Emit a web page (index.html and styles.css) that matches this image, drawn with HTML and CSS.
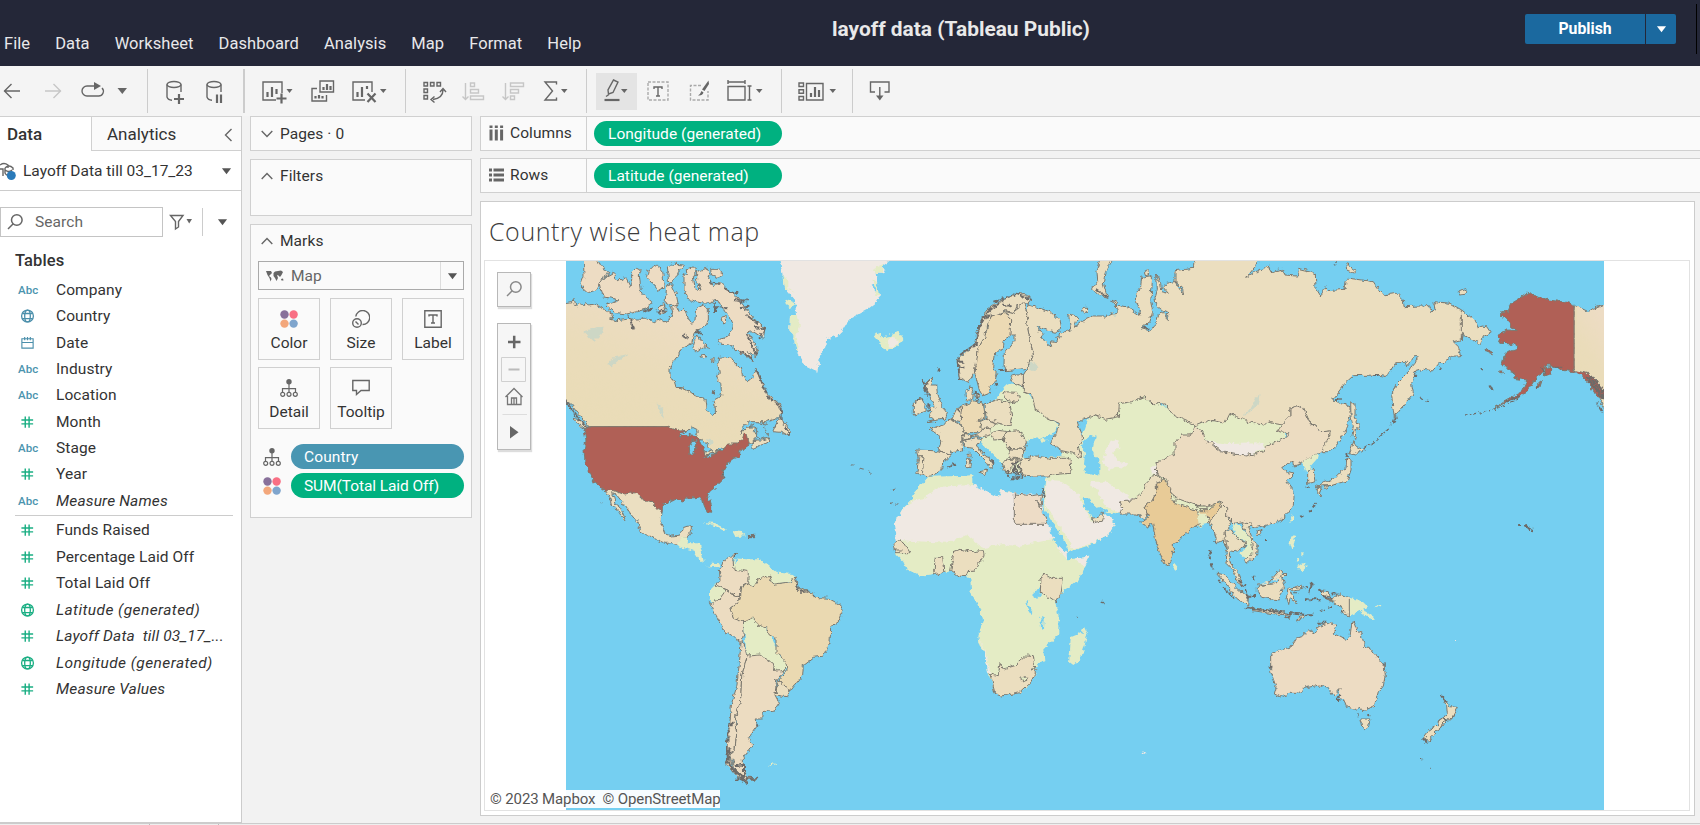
FILE: index.html
```html
<!DOCTYPE html>
<html lang="en">
<head>
<meta charset="utf-8">
<title>layoff data (Tableau Public)</title>
<link rel="stylesheet" href="styles.css">
</head>
<body>
<svg class="defs" width="0" height="0">
  <symbol id="globe" viewBox="0 0 16 16"><g fill="none" stroke="currentColor" stroke-width="1.4"><circle cx="8" cy="8" r="6.3"/><ellipse cx="8" cy="8" rx="3" ry="6.3"/><path d="M2.6 5.3H13.4M2.6 10.7H13.4"/></g></symbol>
  <symbol id="hash" viewBox="0 0 16 16"><path d="M5.6 2V14M9.7 2V14M1.5 5.8H14M1.5 10H14" fill="none" stroke="currentColor" stroke-width="1.5"/></symbol>
  <symbol id="cal" viewBox="0 0 16 16"><path d="M2 3.5H14V13.5H2ZM2 7.5H14M5 1.5V5M8 1.5V5M11 1.5V5" fill="none" stroke="currentColor" stroke-width="1.2"/></symbol>
  <symbol id="dots" viewBox="0 0 18 18"><circle cx="4.5" cy="4.5" r="4.2" fill="#88709a"/><circle cx="13.6" cy="4.5" r="4.2" fill="#f96f84"/><circle cx="4.5" cy="13.6" r="4.2" fill="#f3a77b"/><circle cx="13.6" cy="13.6" r="4.2" fill="#7fa5cd"/></symbol>
  <symbol id="tree" viewBox="0 0 18 18"><circle cx="9" cy="2.8" r="2.7" fill="#666"/><g fill="none" stroke="#666" stroke-width="1.2"><path d="M9 5V13M2.5 13V9.7H15.5V13"/><circle cx="2.7" cy="15.3" r="2"/><circle cx="9" cy="15.3" r="2"/><circle cx="15.3" cy="15.3" r="2"/></g></symbol>
  <symbol id="down" viewBox="0 0 12 8"><path d="M1 1H11L6 7.6Z" fill="currentColor"/></symbol>
  <symbol id="mag" viewBox="0 0 18 18"><g fill="none" stroke="currentColor" stroke-width="1.5"><circle cx="10.8" cy="7" r="5.3"/><path d="M7.2 10.8L2 16"/></g></symbol>
</svg>

<header class="top">
  <nav class="menu"><span>File</span><span>Data</span><span>Worksheet</span><span>Dashboard</span><span>Analysis</span><span>Map</span><span>Format</span><span>Help</span></nav>
  <h1 class="doc-title">layoff data (Tableau Public)</h1>
  <div class="publish"><button class="pub-main">Publish</button><button class="pub-more"><svg width="11" height="8"><use href="#down"/></svg></button></div>
  <i class="edge"></i>
</header>

<div class="toolbar">
  <div class="tools t1">
    <svg width="32" height="34" viewBox="0 74 32 34"><path class="ln" d="M4 91H20M11.5 84L4.5 91L11.5 98"/></svg>
    <svg width="42" height="34" viewBox="32 74 42 34"><path class="ln off" d="M45 91H61M53.5 84L60.5 91L53.5 98"/></svg>
    <svg width="36" height="34" viewBox="74 74 36 34"><path class="ln" d="M97 86H87a5 5 0 0 0 0 10H98.500a4.700 4.700 0 0 0 3.500-8"/><path class="fl" d="M94 82L101 86L94 90Z"/></svg>
    <svg width="30" height="34" viewBox="110 74 30 34"><path class="fl" d="M117.500 88H127L122.300 94Z"/></svg>
  </div>
  <div class="tools t2">
    <svg width="47" height="34" viewBox="148 74 47 34"><g class="ln"><ellipse cx="174" cy="84.500" rx="7" ry="3"/><path d="M167 84.500V97Q168 100 172 100.200M181 84.500V92"/></g><path class="th" d="M179 94V104M174 99H184"/></svg>
    <svg width="40" height="34" viewBox="195 74 40 34"><g class="ln"><ellipse cx="214" cy="84.500" rx="7" ry="3"/><path d="M207 84.500V97Q208 100 212 100.200M221 84.500V92"/></g><path class="th" d="M217 94.500V103M221 94.500V103"/></svg>
  </div>
  <div class="tools t3">
    <svg width="55" height="34" viewBox="245 74 55 34"><path class="ln" d="M276 100H263V82H282V93"/><path class="th" d="M267.500 92V97M272 87V97M276.500 89V94M281.500 93.500V103.500M276.500 98.500H286.500"/><path class="fl" d="M286.500 89H292.500L289.500 93Z"/></svg>
    <svg width="45" height="34" viewBox="300 74 45 34"><path class="ln" d="M320 81H333.500V92H320ZM317 88.500H312V101H326.500V95"/><path class="th" d="M323.500 87V90M327 84V90M330.500 86V90M315.500 96V98.500M319 95V98.500M322.500 96V98.500"/></svg>
    <svg width="55" height="34" viewBox="345 74 55 34"><path class="ln" d="M365 100H353V82H372V92"/><path class="th" d="M357.500 92V97M362 87V97M367 86V89M367.500 93.500L375.500 102M375.500 93.500L367.500 102"/><path class="fl" d="M380 89H386.500L383.300 93Z"/></svg>
  </div>
  <div class="tools t4">
    <svg width="46" height="34" viewBox="406 74 46 34"><path class="ln" d="M424 82.500h3.500v3.500h-3.500zM430.500 82.500h3.500v3.500h-3.500zM437 82.500h3.500v3.500h-3.500zM424 89h3.500v3.500h-3.500zM424 95.500h3.500v3.500h-3.500zM443 90Q443 98 433 99.500M440 92L443 88.500L446 92M434.500 96.500L431 99.500L434.500 102.500"/></svg>
    <svg width="40" height="34" viewBox="452 74 40 34"><path class="ln off" d="M465.500 83V99M462.500 96.500L465.500 99.500L468.500 96.500M470.500 83h4v3.500h-4zM470.500 89.500h8v3.500h-8zM470.500 96h13v3.500h-13z"/></svg>
    <svg width="40" height="34" viewBox="492 74 40 34"><path class="ln off" d="M505.500 83V99M502.500 96.500L505.500 99.500L508.500 96.500M510.500 83h13v3.500h-13zM510.500 89.500h8v3.500h-8zM510.500 96h4v3.500h-4z"/></svg>
    <svg width="40" height="34" viewBox="532 74 40 34"><path class="ln" d="M556.500 84.500V82H545L552.500 91L545 100H556.500V97.500" stroke-width="2"/><path class="fl" d="M561 89H567.500L564.300 93Z"/></svg>
  </div>
  <div class="tools t5">
    <svg class="hot" width="41" height="37" viewBox="596 73 41 37"><path class="ln" d="M613.500 80L618 82L613 92.500L608.500 94L608 90Z"/><path class="th" d="M604.500 100H619.500"/><path class="ln" d="M606 96.500L609 94.500"/><path class="fl" d="M621 89H627.500L624.300 93Z"/></svg>
    <svg width="42" height="34" viewBox="637 74 42 34"><path class="ln dash" d="M648 82H668V100H648Z"/><path class="ln" d="M654 89V87H662V89M658 87V96M656 96H660" stroke-width="1.700"/></svg>
    <svg width="40" height="34" viewBox="679 74 40 34"><path class="ln dash" d="M701 85.500H690.500V100H708V91"/><path class="fl" d="M708.500 80.500L709 84L704.500 91L702 89.500ZM701.500 91L703.500 92.500Q702.500 96 698 95.500Q700.500 94 701.500 91Z"/></svg>
    <svg width="55" height="34" viewBox="719 74 55 34"><path class="ln" d="M728 86.500H745V100H728ZM728 82H745M728 80V84M745 80V84M749.500 86V100M747.500 86H751.500M747.500 100H751.500"/><path class="fl" d="M756 89H762.500L759.300 93Z"/></svg>
  </div>
  <div class="tools t6">
    <svg width="65" height="34" viewBox="782 74 65 34"><path class="ln" d="M799 83h4.500v3.500h-4.500zM799 89.700h4.500v3.500h-4.500zM799 96.500h4.500v3.500h-4.500zM806.500 83.500H823V100H806.500Z"/><path class="th" d="M811 93V97M815 87V97M819 90V97"/><path class="fl" d="M829.500 89H836L832.800 93Z"/></svg>
  </div>
  <div class="tools t7">
    <svg width="50" height="34" viewBox="853 74 50 34"><path class="ln" d="M875 92H870.500V82H889V92H884.500M879.800 87V97"/><path class="fl" d="M876 95.500H883.500L879.800 100.500Z"/></svg>
  </div>
</div>

<main class="work">
  <aside class="data">
    <div class="tabs"><span class="tab on">Data</span><span class="tab">Analytics<svg width="9" height="14" viewBox="0 0 9 14"><path class="ln" d="M7.500 1L1.500 7L7.500 13"/></svg></span></div>
    <div class="source">
      <svg width="16" height="20" viewBox="0 0 16 20"><g class="ln"><path d="M0 4Q4 1 8 4V7M0 8H3V15M5 7Q9 3 13 7V9M5 7V12Q6 14 7 14M5 9Q9 12 12 9"/></g><circle cx="11.300" cy="14.500" r="4.500" fill="#2a7ab9"/></svg>
      <span>Layoff Data till 03_17_23</span><svg class="dd" width="11" height="8"><use href="#down"/></svg>
    </div>
    <div class="search">
      <div class="box"><svg width="18" height="18"><use href="#mag"/></svg><span>Search</span></div>
      <svg class="funnel" width="25" height="18" viewBox="0 0 25 18"><path class="ln" d="M1.500 2.500H14L9.500 8.500V14L6.500 16V8.500Z"/><path class="fl" d="M17.500 6H23L20.200 10.500Z"/></svg>
      <i></i><svg class="dd" width="11" height="8"><use href="#down"/></svg>
    </div>
    <h2>Tables</h2>
    <ul class="fields dims">
      <li><b>Abc</b>Company</li><li class="bl"><svg><use href="#globe"/></svg>Country</li><li class="bl"><svg><use href="#cal"/></svg>Date</li><li><b>Abc</b>Industry</li><li><b>Abc</b>Location</li><li class="gr"><svg><use href="#hash"/></svg>Month</li><li><b>Abc</b>Stage</li><li class="gr"><svg><use href="#hash"/></svg>Year</li><li class="it"><b>Abc</b>Measure Names</li>
    </ul>
    <ul class="fields meas">
      <li class="gr"><svg><use href="#hash"/></svg>Funds Raised</li><li class="gr"><svg><use href="#hash"/></svg>Percentage Laid Off</li><li class="gr"><svg><use href="#hash"/></svg>Total Laid Off</li><li class="gr it wide"><svg><use href="#globe"/></svg>Latitude (generated)</li><li class="gr it"><svg><use href="#hash"/></svg>Layoff Data&nbsp; till 03_17_...</li><li class="gr it wide"><svg><use href="#globe"/></svg>Longitude (generated)</li><li class="gr it"><svg><use href="#hash"/></svg>Measure Values</li>
    </ul>
  </aside>

  <section class="cards">
    <div class="card pages"><h3><svg width="12" height="8" viewBox="0 0 12 8"><path class="ln" d="M.7 1L6 6.500L11.300 1"/></svg>Pages · 0</h3></div>
    <div class="card filters"><h3><svg width="12" height="8" viewBox="0 0 12 8"><path class="ln" d="M.7 7L6 1.500L11.300 7"/></svg>Filters</h3></div>
    <div class="card marks"><h3><svg width="12" height="8" viewBox="0 0 12 8"><path class="ln" d="M.7 7L6 1.500L11.300 7"/></svg>Marks</h3>
      <div class="select"><svg width="18" height="12" viewBox="0 0 18 12"><path class="fl" d="M0 1L5 1L6 3L4 5L3 6L5 7.500L5.500 9L4.500 11.500L3.500 8L1.500 5ZM7.500 3L9 1.500L15 .5L17 2L15.500 5L14 7L12.500 5.500L11 5L12 8L10.500 11L9 8L7.500 6ZM15 9L17 8.500L17.500 10.500H15.500Z"/></svg><span>Map</span><em><svg width="11" height="8"><use href="#down"/></svg></em></div>
      <div class="grid">
        <div><svg width="18" height="18"><use href="#dots"/></svg>Color</div>
        <div><svg width="18" height="18" viewBox="0 0 18 18"><g class="ln"><path d="M3.800 6.500A7 7 0 1 1 10.500 14.500"/><circle cx="5" cy="13" r="4.300"/><path d="M3.500 11.500L6.500 14.500"/></g></svg>Size</div>
        <div><svg width="18" height="18" viewBox="0 0 18 18"><path class="ln" d="M.8 .8H17.200V17.200H.8ZM5 6.500V5H13V6.500M9 5V13M7 13H11"/></svg>Label</div>
        <div><svg width="18" height="18"><use href="#tree"/></svg>Detail</div>
        <div><svg width="18" height="18" viewBox="0 0 18 18"><path class="ln" d="M.8 1.500H17.200V11.500H9L4.500 15.500V11.500H.8Z"/></svg>Tooltip</div>
      </div>
      <div class="enc"><svg width="18" height="18"><use href="#tree"/></svg><span class="pill blue">Country</span></div>
      <div class="enc"><svg width="18" height="18"><use href="#dots"/></svg><span class="pill">SUM(Total Laid Off)</span></div>
    </div>
  </section>

  <section class="canvas">
    <div class="shelf"><div class="name"><svg width="15" height="16" viewBox="0 0 15 16"><path class="bar" d="M2 4.500V15.500M7.300 4.500V15.500M12.600 4.500V15.500M2 .5V3M7.300 .5V3M12.600 .5V3"/></svg>Columns</div><span class="pill">Longitude (generated)</span></div>
    <div class="shelf"><div class="name"><svg width="15" height="14" viewBox="0 0 15 14"><path class="bar" d="M4.500 2H15M4.500 7H15M4.500 12H15M0 2H3M0 7H3M0 12H3"/></svg>Rows</div><span class="pill">Latitude (generated)</span></div>
    <div class="sheet">
      <h2 class="viz-title">Country wise heat map</h2>
      <div class="viz">
        <svg class="map" width="1038" height="549" viewBox="258 63 3114 1647">
          <defs><filter id="rough" x="0" y="0" width="1" height="1" color-interpolation-filters="sRGB"><feTurbulence type="fractalNoise" baseFrequency=".07" numOctaves="2" seed="4"/><feDisplacementMap in="SourceGraphic" scale="17" xChannelSelector="R" yChannelSelector="G"/></filter>
          <linearGradient id="can" x1="0" y1="1" x2=".5" y2="0"><stop offset="0" stop-color="#e9dcb5"/><stop offset=".6" stop-color="#eadcba"/><stop offset="1" stop-color="#eddcc4"/></linearGradient></defs>
          <rect x="258" y="60" width="3120" height="1655" fill="#75cff1"/>
          <g filter="url(#rough)">
          <rect x="258" y="60" width="3120" height="1655" fill="#75cff1"/>
          <!-- Greenland, Iceland -->
          <path class="ice" d="M900 50H1215L1225 66 1205 80 1215 95 1190 100 1195 130 1175 140 1200 170 1192 185 1160 210 1115 235 1100 250 1085 275 1072 288 1040 295 1035 325 1020 350 1012 395 1000 390 972 375 950 335 940 290 928 270 930 230 948 225 945 180 915 145 910 100Z"/>
          <path class="grn" d="M930 225L950 225 960 260 945 290 956 320 950 335 940 290 928 270ZM910 105L922 120 922 145 935 150 945 160 930 150 915 145ZM918 178L945 190 935 205 920 195ZM1175 90L1210 75 1205 95 1185 100ZM1175 115L1190 125 1198 172 1180 165 1190 150Z"/>
          <g transform="translate(1140 0)"><path class="grn" d="M40 285L60 278 65 292 90 287 115 275 130 298 110 320 80 330 60 322 62 308Z"/><ellipse class="ice" cx="98" cy="306" rx="18" ry="14"/></g>
          <!-- North America -->
          <g class="st">
          <path fill="url(#can)" d="M240 190L275 185 282 175 288 198 300 190 308 198 320 188 325 195 340 193 365 203 385 213 400 225 392 238 410 242 440 238 450 228 455 240 475 240 490 232 520 245 545 238 560 250 565 235 580 225 575 200 590 190 600 215 612 205 625 235 635 250 648 240 650 205 670 195 685 205 685 240 668 265 650 270 640 285 635 310 605 325 595 345 582 362 570 390 570 412 582 420 588 442 605 443 630 455 650 470 675 475 678 508 697 528 706 522 706 505 702 480 720 470 725 455 722 430 710 418 718 395 713 370 716 352 735 350 755 355 770 375 785 385 787 410 802 425 812 420 822 405 828 385 845 420 857 455 880 475 903 497 905 520 885 538 860 545 810 545 790 560 778 585 800 562 828 558 822 575 830 592 822 603 808 614 772 615 700 640 675 647 650 600 568 562 328 562 315 545 290 515 270 490 240 480Z"/>
          <path class="b2" d="M310 50H350L362 80 390 95 360 125 348 150 325 158 302 137 312 110ZM400 97L405 115 425 125 435 110 450 140 455 120 455 100 470 85 480 90 478 110 485 160 515 185 505 205 470 215 440 222 405 218 378 195 420 180 370 170 362 150 358 130 380 108ZM505 90L530 76 548 90 552 140 535 150 520 135 500 110ZM562 78L575 72 608 75 600 95 585 110 573 130 565 120ZM560 140L575 132 588 160 595 195 575 200 555 190Z"/>
          <path class="b2" d="M620 90Q635 75 652 85L640 110 645 145 660 150 650 120 650 95 680 85 690 100 685 120 700 140 720 125 745 150 775 175 800 210 830 245 855 265 850 295 820 275 805 278 830 320 830 350 805 335 820 362 780 340 750 315 715 312 718 298 748 290 760 255 750 230 730 210 712 180 690 190 660 188 625 178 612 150 612 110ZM692 88L720 88 730 105 715 112 695 105ZM650 285L665 305 690 325 670 320 650 335 638 325ZM663 345l12-2 2 8-10 4zM695 355l8-2-2 14zM722 232l16-4 2 16-12 8zM535 200l18-6 5 20-18 8z"/>
          <path class="b1" d="M826 600L850 600 870 592 865 603 835 620 820 628 815 618ZM900 528L878 575 905 577 925 588 932 575 922 555 908 552ZM282 535L300 540 322 560 315 568 290 550Z"/>
          <path class="mx" d="M375 748H495L546 812 543 850 555 880 575 888 600 885 608 862 635 857 630 880 622 893 603 895 605 903 592 920 580 908 555 910 500 885 478 870 475 850 450 820 430 790 410 765 398 758 405 790 420 800 438 842 425 830 410 805 395 795 390 775Z"/>
          </g>
          <g class="dk"><path d="M690 125L715 135M735 145L760 160 775 155M765 180L790 185 800 180M780 205L805 200M800 225L835 250M825 262L855 265 835 300M800 280L830 345M780 335L820 358M258 480L275 510 328 575M445 225L460 265M608 285L625 295M650 270L665 285M490 215L520 205M530 215L555 212M830 390L860 460M860 465L900 500M905 500V540M700 200L740 205M705 215V190M915 560L930 588M728 680L733 715"/></g>
          <!-- Central America, Caribbean -->
          <path class="grn" d="M603 892H622L620 910H660L667 945 672 970 690 980 700 968 718 970 712 980 690 982 680 975 655 955 640 932 592 918ZM665 846L700 848 740 868 735 874 690 852ZM757 873L785 876 797 886 765 888Z"/>
          <path class="dot" d="M806 886h18v4h-18zM1115 675h6M1138 684l14 4M1163 692l9 8M1238 748h8M1230 790l8 4M1243 792h10M362 785h5M697 452l8 4-2 10-6-6z"/>
          <!-- Lakes -->
          <path class="lake" d="M310 275L350 262 372 260 365 280 340 305 325 290ZM378 372L410 348 445 343 410 365 395 382ZM530 490L548 505 555 540 545 525Z"/>

          <!-- Eurasia -->
          <g transform="translate(1140 0)">
          <path class="grn" d="M432 440L475 428 500 455 540 515 595 555 575 590 540 615 500 600 490 650 560 650 605 632 650 640 690 520 780 480 860 465 1000 550 1100 515 1270 540 1280 590 1220 650 1100 700 1050 850 1015 858 900 800 780 822 740 815 715 805 700 792 685 775 668 775 672 800 690 825 700 845 725 840 738 822 765 850 745 885 690 915 625 937 620 915 600 880 580 850 550 800 560 705 480 700 430 690 430 665 415 660 385 630 362 605 372 590 380 520Z"/>
          <path class="ice" d="M560 720L600 722 625 740 655 760 670 800 695 845 725 842 738 822 765 850 745 885 690 912 640 925 600 860 555 795ZM690 725L740 725 790 760 820 780 780 822 740 800 715 760ZM752 605L775 600 780 620 760 640 770 665 805 670 795 685 770 680 750 690 728 670 735 640ZM1035 600L1100 612 1205 610 1215 625 1155 650 1085 638ZM870 680L895 670 890 705 875 700Z"/>
          <path class="wt" d="M498 625L512 597 528 588 540 600 550 610 570 605 575 612 605 632 608 650 570 652 540 648 500 655 490 645ZM672 600L690 585 710 590 705 610 692 620 705 650 718 655 718 705 700 708 675 700 672 670 675 640 665 620ZM543 595l30-12 12 4-20 14z"/>
          <g class="st b1">
          <path d="M505 195L540 205 570 215 600 240 605 265 590 277 560 270 528 258 545 280 552 305 575 322 570 302 590 305 600 280 632 270 626 225 640 222 652 235 643 262 665 245 700 228 740 228 772 215 765 195 800 200 825 215 842 228 838 205 826 185 828 160 842 140 845 112 865 108 878 115 875 150 872 185 878 215 870 245 845 265 870 273 885 255 895 225 910 215 925 245 922 215 905 208 888 195 885 175 892 150 890 105 902 130 905 155 925 160 908 140 920 130 945 125 970 165 968 145 945 125 945 92 1000 85 1003 50H1200L1185 80 1160 112 1180 98 1205 90 1225 75 1232 95 1270 88 1275 105 1312 108 1316 85 1350 93 1366 102 1368 145 1382 168 1395 140 1405 152 1455 148 1458 125 1468 115 1540 125 1550 140 1570 165 1610 160 1630 180 1632 200 1705 197 1715 215 1725 212 1722 185 1770 190 1805 210 1850 245 1858 265 1862 258 1880 260 1892 278 1870 290 1862 313 1840 300 1812 290 1810 275 1803 300 1780 305 1795 320 1802 350 1775 352 1740 370 1720 393 1690 388 1665 395 1655 430 1660 460 1635 490 1620 510 1603 532 1598 500 1595 465 1608 432 1640 400 1665 370 1675 350 1660 350 1640 380 1635 365 1610 365 1585 400 1580 410 1555 405 1480 407 1455 430 1418 478 1440 490 1470 500 1470 530 1460 570 1430 615 1405 635 1385 635 1385 615 1400 605 1412 573 1385 575 1350 548 1330 505 1312 498 1290 505 1290 530 1268 552 1230 545 1210 555 1165 545 1130 530 1110 520 1095 550 1050 540 1005 558 990 548 960 535 940 525 910 488 885 495 850 470 815 485 778 492 775 530 735 538 700 525 670 535 653 550 665 580 668 600 655 620 665 655 640 640 605 632 570 610 590 580 595 550 560 535 540 515 528 512 515 465 490 455 490 405 505 380 520 345 510 300 500 250 498 210Z"/>
          <path d="M722 50H757L735 100 730 130 742 172 715 165 695 145 710 125 708 95ZM665 205l12-3 7 8-10 9-9-5zM853 95l10-3 4 8-10 5zM755 180l15 8 0 10zM1460 90l-2-18 10 0 2 8 20 15-5 5zM1795 155l18-8 12 8-10 8-20 2zM1804 210V300" />
          <path class="c2" d="M1005 558L990 585 965 585 945 610 945 640 888 670 890 700 920 720 935 760 965 785 1005 795 1045 800 1080 783 1090 795 1100 830 1120 850 1145 845 1170 855 1190 862 1240 850 1260 842 1285 820 1300 795 1302 770 1295 745 1280 725 1302 702 1285 698 1265 686 1298 662 1300 678 1320 672 1345 658 1375 640 1385 635 1400 605 1412 573 1385 575 1350 548 1330 505 1312 498 1290 505 1290 530 1268 552 1252 572 1285 582 1280 592 1250 605 1215 620 1210 635 1155 648 1085 635 1055 610 1035 600 1030 575Z"/>
          <path d="M870 710L895 705 910 722 888 730 890 755 870 790 855 800 865 825 850 835 825 822 780 822 785 805 780 782 820 780 845 760ZM1085 785L1100 800 1100 830 1115 850 1095 880 1105 905 1100 930 1090 900 1072 908 1060 870 1045 850 1065 825Z"/>
          <path class="in" d="M890 730L915 722 932 745 932 765 945 788 1005 808 1015 830 1018 853 990 870 940 912 940 945 930 970 918 977 905 955 888 905 878 850 860 862 845 845 865 830 855 800 870 790 890 755ZM1018 812L1045 812 1075 785 1085 795 1065 825 1050 850 1045 830 1015 822Z"/>
          <path class="grn" d="M945 773L1012 797 1008 810 945 790ZM1012 798h28l2 8h-26z"/>
          <path d="M290 360L320 335 345 310 350 280 365 240 380 210 410 190 440 175 470 160 500 165 515 182 505 195 490 190 470 200 465 220 435 212 420 222 395 228 380 255 375 290 355 325 352 400 345 395 325 428 298 415 295 385Z"/>
          <path class="se" d="M435 215L452 240 453 285 435 295 430 320 402 345 398 385 410 400 405 425 390 440 388 460 368 468 358 450 345 400 355 325 375 290 385 245 395 228Z"/>
          <path d="M470 200L490 188 500 210 500 250 510 300 520 345 500 385 440 392 432 375 433 340 465 300 465 285 450 285 452 240 435 212 465 220ZM452 408L490 403 490 437 460 430ZM430 455L470 457 478 470 470 488 440 480ZM320 480L318 455 330 440 340 455 338 480ZM345 465l10-2 2 12-10 4z"/>
          <path class="se" d="M300 500L325 490 340 482 370 490 375 530 355 545 370 565 360 578 315 578 302 550Z"/>
          <path d="M375 492L410 480 450 488 455 530 450 558 410 548 378 535ZM355 545L378 537 410 550 395 563 370 565ZM330 588L360 580 370 565 395 565 390 585 360 592ZM392 588L410 570 440 575 430 598 400 600ZM440 575L480 572 500 610 495 628 445 625 430 600ZM445 627L492 628 485 655 450 655ZM425 665L450 658 485 657 465 670 452 680 455 700 435 700ZM275 540L290 505 305 503 300 545ZM270 538L300 552 315 578 305 600 308 630 275 635 272 642 235 632 243 605 235 585 210 568 250 555ZM302 590L318 580 335 585 330 597 308 600ZM308 602L345 593 368 600 350 615 365 640 400 662 400 680 392 685 380 665 340 625 312 620ZM355 695L380 690 376 704ZM320 658L332 658 330 680 320 680ZM324 640h6v12h-6zM170 630L240 633 275 645 248 670 245 690 215 708 195 710 185 703 170 700 175 660ZM175 650H192L187 700M200 545L225 538 208 530 215 515 205 505 225 500 220 485 208 478 208 460 198 455 200 430 220 410 212 435 230 435 232 460 245 500 262 520 255 537ZM160 525L160 490 180 475 195 490 195 515ZM485 660L530 648 570 655 605 655 630 655 633 700 600 702 560 708 520 708 490 705 478 680ZM695 835l20-3 15-15 5 2-8 25-25 3z"/>
          </g>
          <g class="dk"><path d="M292 350L300 420M295 365H312M295 380H315M300 345L350 310M348 300L365 245M355 265L390 205M362 235L395 225M385 215L430 180M400 185L470 162M465 160L515 180M430 190L455 200M188 420L205 470M192 455L200 430M235 395l4-14M345 455L355 480M455 665L480 710M460 680L470 715M450 715H485M470 660L460 700M475 675L490 715M710 150L745 172M850 265H870M290 510L300 520M170 480L190 478M205 490V515M405 440L412 430M415 390H440M548 745L555 770M535 780L545 800M262 680L285 672M440 690l8 20M395 660l8 10"/></g>
          <g class="lake"><path d="M508 370L525 366 536 380 528 392 512 392ZM1145 527L1170 510 1190 470 1199 466 1192 495 1160 525ZM755 218l15 4-5 8z"/></g>
          </g>
          <!-- East Asia and Alaska -->
          <g transform="translate(2280 0)">
          <path class="grn" d="M185 668L235 640 230 658 212 678 212 692 195 692ZM150 830l8-6 2 12-8 14z"/>
          <g class="st b1"><path d="M203 690L222 686 228 725 203 730ZM338 605L350 620 372 628 345 645 325 640ZM320 656L333 660 333 690 322 722 295 730 270 738 245 737 228 742 250 725 285 715 305 695 318 685ZM232 742L245 745 240 768 232 755ZM252 740l18-4-10 12zM332 488L345 490 345 530 358 560 345 570 348 598 336 590 340 560 333 530ZM52 875l14-4-4 12-12 4z"/>
          <path fill="url(#can)" d="M1002 195L1045 215 1060 205 1110 187V520L1090 500 1060 440 1035 405 1002 390Z"/>
          <path class="us" d="M785 215L805 215 815 190 840 175 870 155 890 170 930 180 985 188 1002 195V395L960 390 940 375 920 375 905 400 890 410 865 450 840 470 800 485 765 505 800 480 845 455 862 420 822 415 820 395 805 390 787 370 795 340 830 328 828 312 785 310 770 288 800 270 832 272 812 260 800 235 785 228ZM885 440L905 425 900 440 890 450ZM735 328L762 336 755 341 738 334ZM775 393h12l3 5h-10zM915 385l20-8 0 20-20 8z"/>
          <path class="us" d="M1002 390L1050 402 1092 450 1110 480 1070 470 1045 425Z"/></g>
          <g class="dk"><path d="M1040 410L1085 470M1055 405L1095 460M1048 408L1092 470M1045 420L1090 478M1070 485L1088 520M470 530L463 540M1085 470H1110M180 832L190 827M207 815L215 811M218 802L222 798M226 793L230 790M540 472l12 10M560 482l4 2M722 385l8 4M596 390l8-6M522 410l8-8M750 440l5 12M200 742h6M318 640l8 14M835 852h8M856 858l12 6M872 868l8 10M940 380h30M800 485l40-20M905 385l10 15M885 445l15-8M283 70l4 6M285 480h20M400 405h18"/><path class="chain" d="M845 468Q780 515 672 525M463 540Q430 590 370 628"/></g>
          </g>
          <!-- Africa -->
          <g transform="translate(1140 840)">
          <path class="grn" d="M205-130L165-85 155-60 130-35 105 10 110 35 112 60 100 75 105 100 130 125 140 148 180 167 220 163 260 155 275 155 300 168 330 170 333 205 328 215 352 245 370 300 355 345 358 375 375 400 385 460 405 520 425 527 475 518 500 505 530 460 528 435 553 420 550 385 598 345 598 300 585 245 610 215 655 180 688 110 625 118 615 100 590 70 575 30 550-20 543-40 552-75 520-70 463-80 450-85 425-90 415-68 340-100 340-135 300-132Z"/>
          <path class="ice" d="M165-60L130-35 105 10 110 60 200 65 260 68 320 45 370 85 430 72 480 80 540 65 590 55 575 30 550-20 543-75 463-80 425-90 415-68 340-105 240-100 190-65ZM590 70L620 100 622 118 600 95ZM645 115L688 110 675 138 655 125ZM355 350L375 400 385 460 392 462 380 405 362 365Z"/>
          <path class="wt" d="M522 210l20-6 0 20-12 12-10-8zM500 240l5 2 0 15 14 22-4 5-15-22zM541 290l10 5-2 35-6-6zM550-15L568 20 582 65 620 95 622 80 600 45 575 5 560-25Z"/>
          <g class="st b1"><path d="M100 75L115 62 132 68 150 98 105 98ZM105 90h20M225 112H248L255 155 222 165ZM282 95L300 88 340 95 370 92 372 105 345 150 325 152 318 170 295 168 272 152ZM543 175L552 160 575 175 610 175 603 220 588 247 541 215ZM390 462L415 467 420 430 430 447 465 437 500 405 520 407 524 440 530 452 510 490 480 518 425 528 405 520Z"/><path fill="#eddcc6" d="M463-78L520-73 548-78 543-40 530-60 566 13 463 13Z"/><path class="grn" d="M483 472l12-5 8 8-10 11-9-4zM515 442l8-4 4 10-8 4z"/></g>
          <path class="grn" d="M672 320L682 342 672 385 660 420 640 435 627 425 630 395 632 352 665 338ZM942 128L955 143 950 152 940 150Z"/>
          <path class="ice" d="M844 697h10l3 7h-10z"/>
          <!-- South-east Asia -->
          <path class="grn" d="M1118 12L1140 15 1175 60 1180 100 1160 117 1138 100 1160 80 1155 60 1130 55ZM1012-22l25 0 8 25-30 8z"/>
          <g class="st b1"><path d="M1095 35L1115 30 1130 55 1160 65 1155 80 1125 95 1110 92 1108 112 1112 130 1135 160 1150 200 1130 185 1118 150 1098 130 1102 90ZM1145 5L1175 10 1165 25 1175 50 1192 75 1190 105 1160 130 1155 118 1178 100 1175 60 1155 30ZM1190 32l12-2 4 8-12 9-7-6zM1072 160L1095 165 1130 205 1165 235 1163 258 1130 235 1105 200ZM1162 262L1230 270 1300 280 1295 286 1230 280 1180 272Z"/></g>
          <g class="dk"><path d="M1048 90L1050 115M1055 130l4 18M1075 180l10 8M1090 200l12 18M1105 215l15 20M1155 205l10 25M1180 230v4M728 245v5M649 290h3M1135 180l20 20M1065 60l5 10"/></g>
          </g>
          <!-- Oceania -->
          <g transform="translate(2280 840)">
          <path class="grn" d="M155 45L166 48 158 90 148 75ZM152 -5h7v12h-7zM168 115l8-3 2 10-7 3zM184 98l6 4 0 8-6-4zM170 138L195 128 201 140 185 155ZM328 233L360 240 385 265 370 270 408 296 385 292 360 272 328 288ZM405 258l18-8 2 4-18 8z"/>
          <path class="ice" d="M532 390l13 10M645 363h6v3h-6z"/>
          <g class="st b1"><path d="M52 200L85 190 120 148 138 165 128 175 135 200 125 210 115 240 65 232 52 215ZM55 195L100 192 122 168H130M145 205L190 198 188 205 150 212 155 225 172 250 150 235 145 258 138 235ZM240 213L268 215 270 230 255 228ZM255 235L275 238 300 222 328 233V288L300 278 308 262 275 243ZM170 300l22-14 4 4-20 12zM135 290l15 3 0 5z"/>
          <path class="b2" d="M92 405L115 392 155 380 170 355 185 350 205 330 225 338 235 320 260 310 290 315 280 340 320 362 330 350 335 310 340 303 350 330 362 337 372 375 395 390 410 410 432 435 436 465 430 495 415 515 403 558 372 572 360 565 350 570 320 560 312 540 295 530 300 508 282 528 265 502 238 495 190 505 175 520 145 520 125 532 103 522 108 500 92 455Z"/>
          <path d="M360 597L390 597 385 620 375 627 365 618ZM602 525L622 545 630 560 652 562 645 575 632 600 612 598 622 580 620 555ZM600 595L615 600 600 625 585 635 570 662 550 655 565 635 595 615Z"/></g>
          <g class="dk"><path d="M20 265L200 285M200 205v-10M208 220l8-32M195 238h45M232 208l15 8M250 228l30 12M275 220l20 2M235 308h22M290 540h14M292 535l8-14M200 283h20M240 275l8-5M265 262h8M160 220h15M602 525l20 25M548 655l15 15M612 600h10M543 718h4M571 743h2M352 583h4M388 585v4M430 440l2-10M86 440h8M40 180v-10M20 230h25M140 292h15M875 35h5M835 12h8M856 18l12 6M872 28l8 10M302 275h15M75 60h6"/></g>
          </g>
          <!-- South America -->
          <g transform="translate(0 840)">
          <path class="grn" d="M762 115L800 118 840 118 895 158 940 162 945 180 880 195 870 175 850 230 805 200 760 148ZM708 192L740 205 725 235 700 252 690 235 690 210ZM790 300L825 290 870 340 895 400 925 430 915 455 880 455 800 412ZM862 735l24-6 0 4-22 5zM1065 769l8 3"/>
          <g class="st b1">
          <path class="c2" d="M770 100L735 118 718 145 720 180 708 195 735 208 755 222 780 230 785 200 803 190 805 155 780 150 762 148 758 115ZM688 245L700 250 720 235 738 210 755 222 780 230 780 242 750 265 760 290 790 300 792 340 785 368 735 335 705 280Z"/>
          <path class="c2" d="M783 368L790 365 802 412 795 430 785 470 782 540 770 580 765 605 770 640 765 690 750 700 755 740 800 778 805 790 770 770 740 735 740 690 750 600 755 550 770 500 778 430Z"/>
          <path class="c2" d="M802 408L840 405 880 430 885 453 912 452 922 440 890 480 885 525 898 550 885 570 850 575 848 597 825 597 830 620 805 655 818 675 790 715 790 738 800 770 830 777 800 778 760 740 752 700 765 690 770 640 768 590 782 540 785 470 795 430Z"/>
          <path d="M895 482L928 505 920 530 885 525Z"/>
          <path class="br" d="M868 165L878 193 935 185 945 170 955 205 1000 220 1005 232 1045 235 1082 255 1087 275 1078 300 1052 320 1050 370 1030 408 1000 412 970 435 968 465 930 515 925 505 895 482 922 450 918 430 905 405 888 400 888 355 868 345 860 325 825 310 822 293 795 305 760 292 750 265 780 242 785 200 803 192 822 200 835 178Z"/></g>
          <g class="dk"><path d="M748 605V625M755 605V620M745 630L752 650M742 640V665M740 680V725M748 685V735M743 690V720M742 725L770 765M750 735L785 775M755 745L790 770M765 735H792V770M765 775L805 790M770 760L800 785M795 775H835M832 612l4 6M738 662h6M950 190L955 212M960 215H985M1000 222l5 10M765 105h6"/></g>
          <path class="wt" d="M762 120l10-4 2 8-8 4z"/>
          </g>
          <!-- United States -->
          <path class="us st" d="M328 562L568 561 572 565 600 573 625 570 650 590 660 600 670 625 675 645 690 642 708 635 735 620 740 612 770 612 785 603 792 583 803 585 808 612 790 625 780 635 778 650 750 660 735 680 727 700 730 715 705 740 690 750 683 770 692 800 692 820 682 818 672 795 668 778 655 772 615 775 610 783 585 778 560 788 548 797 546 815 530 808 520 790 510 780 495 785 480 768 465 758 430 762 400 752 375 750 362 740 345 732 330 700 315 665 312 630 318 600 312 570Z"/>
          <path class="wt st" d="M593 590L612 575 635 562 655 572 648 590 620 585ZM630 648L628 620 635 602 652 600 645 620 640 648ZM656 595L680 608 695 632 678 638 668 620ZM668 652L690 642 712 636 690 650ZM705 630L735 622 728 632ZM805 560L830 548 860 552 850 560 865 590 845 598 830 588 830 562Z"/>
          <path class="lake" d="M680 598l15 2 4 12-12 6z"/>
          </g>
          <path fill="#eadcb8" d="M332 552H566V559H332ZM3284 205H3291V388H3284Z"/>
          <path class="us" d="M332 559H566V568H332ZM3274 202H3282V388H3274Z"/>
          <path class="st" fill="none" d="M326 560H570M3282 194V392"/>
        </svg>
        <div class="ctl find"><svg width="18" height="18"><use href="#mag"/></svg></div>
        <div class="ctl zoom">
          <svg width="34" height="126" viewBox="0 0 34 126"><path d="M10 18H22.500M16.200 11.800V24.200" fill="none" stroke="#666" stroke-width="2.500"/><path d="M3.500 33.500H27.500V57.500H3.500Z" fill="none" stroke="#d0d0d0"/><path d="M10.500 45.500H21.500" stroke="#bbb" stroke-width="2"/><path d="M7.500 73L16 64.500L24.500 73M9.500 72V80.500H23V72M13.500 80.500V74H18.500V80.500M16 74V80" fill="none" stroke="#777" stroke-width="1.300"/><path d="M4.500 90.500H29" stroke="#ddd"/><path d="M12 102V114.500L20.500 108.200Z" fill="#666"/></svg>
        </div>
        <div class="credit">© 2023 Mapbox&nbsp; © OpenStreetMap</div>
      </div>
    </div>
  </section>
</main>
<footer class="status"><i></i><i></i></footer>
</body>
</html>
```
FILE: styles.css
```css
* { box-sizing: border-box; }
body { margin: 0; width: 1700px; height: 825px; overflow: hidden; display: flex; flex-direction: column; background: #f2f2f2; color: #333; font: 15.5px/20px Roboto, "Liberation Sans", sans-serif; letter-spacing: .08px; }
h1, h2, h3, ul { margin: 0; padding: 0; font-weight: 400; list-style: none; }
svg { flex: none; display: block; }
.defs { position: absolute; }
.ln { fill: none; stroke: #666; stroke-width: 1.4; }
.th { fill: none; stroke: #666; stroke-width: 2.2; }
.bar { fill: none; stroke: #666; stroke-width: 3; }
.fl { fill: #666; }
.off { stroke: #c6c6c6; }
.dash { stroke: #aaa; stroke-dasharray: 3 1.5; }

.top { height: 66px; flex: none; position: relative; display: flex; background: #242738; color: #e8e8ea; }
.menu { display: flex; gap: 25px; padding: 34px 0 0 4px; width: 832px; font-size: 16.5px; letter-spacing: .07px; }
.doc-title { padding-top: 17px; font-size: 20.9px; line-height: 24px; font-weight: 700; letter-spacing: 0; width: 693px; white-space: nowrap; color: #e9e9e9; }
.publish { display: flex; gap: 1px; padding-top: 14px; height: 44px; }
.publish button { border: 0; background: #1b699f; color: #fff; font: 700 15.8px/20px Roboto, sans-serif; padding: 0; }
.pub-main { width: 120px; border-radius: 2px 0 0 2px; }
.pub-more { width: 30px; display: grid; place-items: center; border-radius: 0 2px 2px 0; }
.edge { margin: 4px 0 0 20px; width: 1px; height: 50px; background: #000; }

.toolbar { height: 50px; flex: none; display: flex; background: #f4f4f4; padding: 3px 0; }
.tools { display: flex; align-items: center; border-right: 1px solid #ccc; }
.t1 { width: 148px; } .t2 { width: 97px; border-right: 2px solid #ccc; } .t3 { width: 161px; } .t4 { width: 181px; }
.t5 { width: 195px; padding-left: 9px; } .t6 { width: 71px; } .t7 { border: 0; }
.hot { background: #e4e4e4; }

.work { height: 707px; flex: none; display: flex; }
.data { width: 242px; background: #fff; border-right: 1px solid #ccc; border-bottom: 1px solid #ccc; }
.tabs { display: flex; height: 35px; font-size: 17px; letter-spacing: 0; }
.tab { width: 150px; background: #fafafa; border: 1px solid #d0d0d0; border-right: 0; padding: 7px 8px 0 15px; display: flex; justify-content: space-between; }
.tab svg { margin-top: 4px; }
.tab.on { width: 91px; border: 0; border-top: 1px solid #d0d0d0; background: #fff; font-weight: 500; padding-left: 7px; }
.source { height: 40px; display: flex; align-items: center; gap: 7px; border-bottom: 1px solid #ccc; padding-right: 9px; letter-spacing: 0; }
.dd { color: #555; }
.source .dd { margin-left: auto; }
.search { margin-top: 16px; height: 30px; display: flex; align-items: center; }
.box { width: 163px; height: 30px; border: 1px solid #c4c4c4; display: flex; align-items: center; gap: 11px; padding-left: 5px; color: #666; }
.funnel { margin-left: 6px; }
.search i { width: 1px; height: 28px; background: #ccc; margin: 0 14px 0 8px; }
.data h2 { font-size: 16.5px; font-weight: 500; margin: 14px 0 0 15px; line-height: 20px; letter-spacing: .1px; }
.fields li { height: 26.33px; display: flex; align-items: center; white-space: nowrap; padding-left: 41px; }
.fields li svg { height: 16px; margin-left: -21px; width: 15px; margin-right: 21px; }
.fields b { font-weight: 500; font-size: 11.5px; color: #4b94ae; width: 38px; margin-left: -23px; letter-spacing: .1px; }
.dims { margin-top: 6px; }
.meas { margin: 1px 8px 0 15px; border-top: 1px solid #ccc; padding-top: 1px; }
.meas li { height: 26.5px; padding-left: 26px; }
.gr svg { color: #1aae83; } .bl svg { color: #4b8fab; }
.it { font-style: italic; letter-spacing: .15px; }
.wide { letter-spacing: .42px; }
.it b { font-style: normal; }

.cards { width: 230px; padding-left: 8px; display: flex; flex-direction: column; gap: 8px; }
.card { width: 222px; background: #fafafa; border: 1px solid #d0d0d0; }
.pages { height: 35px; } .filters { height: 57px; } .marks { height: 294px; padding: 0 7px; }
.card h3 { font-size: 15.5px; line-height: 20px; display: flex; align-items: center; gap: 7px; padding: 6px 0 0 10px; }
.pages h3 { padding-top: 7px; }
.marks h3 { padding-left: 3px; }
.select { margin-top: 10px; height: 29px; border: 1px solid #aaa; display: flex; align-items: center; color: #666; padding-left: 7px; gap: 7px; }
.select em { margin-left: auto; height: 27px; width: 23px; border-left: 1px solid #ddd; display: grid; place-items: center; color: #555; }
.grid { margin-top: 8px; display: grid; grid-template-columns: repeat(3, 62px); gap: 7px 10px; }
.grid div { height: 62px; border: 1px solid #d0d0d0; display: flex; flex-direction: column; align-items: center; padding-top: 11px; gap: 5px; letter-spacing: 0; }
.enc { display: flex; align-items: center; gap: 10px; padding-left: 5px; margin-top: 4px; }
.grid + .enc { margin-top: 15px; }
.pill { height: 25px; line-height: 26px; border-radius: 13px; background: #00b180; color: #fff; padding-left: 13px; width: 173px; letter-spacing: -.08px; }
.blue { background: #4996b2; letter-spacing: .1px; }

.canvas { flex: 1; padding-left: 8px; }
.shelf { height: 35px; background: #fafafa; border: 1px solid #d0d0d0; border-right: 0; display: flex; align-items: center; margin-bottom: 7px; }
.shelf .pill { width: 188px; margin-left: 7px; padding-left: 14px; letter-spacing: .04px; }
.name { width: 106px; height: 33px; border-right: 1px solid #d0d0d0; display: flex; align-items: center; gap: 6px; padding: 0 0 1px 8px; }
.sheet { width: 1215px; height: 615px; border: 1px solid #ccc; background: #fff; padding: 0 4px 0 3px; }
.shelf + .sheet { margin-top: 8px; }
.viz-title { height: 58px; padding: 12px 0 0 5px; font: 300 25px/34px "Open Sans", sans-serif; letter-spacing: .6px; color: #3c3c3c; }
.viz { position: relative; height: 551px; border: 1px solid #e2e2e2; padding-left: 81px; overflow: hidden; }
.ctl { position: absolute; left: 12px; width: 34px; background: #f6f6f6; border: 1px solid #b8b8b8; box-shadow: 1px 2px 1px #ddd; color: #888; }
.find { top: 11px; height: 35px; padding: 7px 0 0 7px; }
.zoom { top: 62px; height: 127px; }
.credit { position: absolute; left: 2px; bottom: 2px; width: 233px; height: 18px; font-size: 15px; letter-spacing: -.12px; line-height: 18px; background: rgba(255,255,255,.94); color: #555; padding-left: 3px; white-space: nowrap; }
.ice { fill: #f0e9e3; } .grn { fill: #e4ecc5; } .wt { fill: #75cff1; }
.b1 { fill: #ebdebf; } .b2 { fill: #eddcc3; } .mx { fill: #ebdfc1; } .us { fill: #b06056; } .br { fill: #ead9b1; } .se { fill: #ecdab4; } .in { fill: #e8cb97; } .c2 { fill: #ecdcc1; }
.st { stroke: #7d796f; stroke-width: 3; stroke-linejoin: round; }
.dk { fill: none; stroke: #6d6b68; stroke-width: 6; stroke-dasharray: 14 2; }
.chain { stroke-width: 4; stroke-dasharray: 12 5 5 7; }
.dot { fill: #77716b; stroke: #77716b; stroke-width: 3; }
.lake { fill: #cdd7c5; }

.status { height: 2px; border-top: 1px solid #ccc; background: #eee; display: flex; }
.status i { border-right: 1px solid #bbb; width: 150px; height: 1px; }
.status i + i { width: 69px; }
```
